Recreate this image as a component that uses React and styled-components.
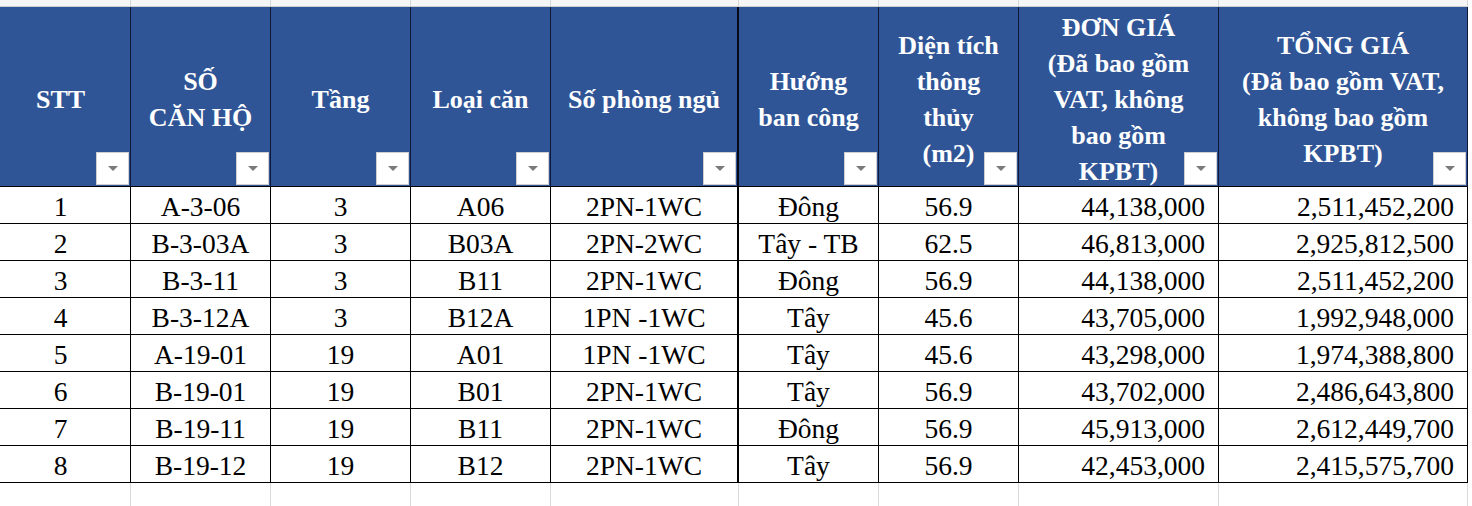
import React from 'react';
import styled, { createGlobalStyle } from 'styled-components';

const SERIF = '"Liberation Serif", "Times New Roman", serif';

const GlobalStyle = createGlobalStyle`
  body {
    margin: 0;
    font-family: "Liberation Serif", serif;
  }
`;

const COLUMNS = '140px 140px 140px 140px 188px 140px 140px 200px 249px';

const Page = styled.div`
  width: 1472px;
  height: 506px;
  overflow: hidden;
  background: #ffffff;
`;

// the whole sheet is one grid, first column starts a little off screen
const Table = styled.div`
  display: grid;
  grid-template-columns: ${COLUMNS};
  margin-left: -9px;
`;

const TopCell = styled.div`
  box-sizing: border-box;
  height: 7px;
  background: #f6f6f6;
  border-right: 1px solid #d6d6d6;
  border-bottom: 1px solid #cfcfcf;
`;

const HeadCell = styled.div`
  box-sizing: border-box;
  position: relative;
  height: 180px;
  background: #2f5597;
  border-right: ${p => (p.$thick ? '2px solid #050a1c' : '1px solid #0d1838')};
  border-bottom: 1px solid #000000;
  display: flex;
  align-items: center;
  justify-content: center;
  padding-top: 6px;
  text-align: center;
  white-space: nowrap;
`;

const HeadText = styled.div.attrs({ style: { fontFamily: SERIF } })`
  color: #ffffff;
  font-family: "Liberation Serif", serif;
  font-weight: bold;
  font-size: 26px;
  line-height: 36px;
`;

const FilterButton = styled.div`
  box-sizing: border-box;
  position: absolute;
  right: 1px;
  bottom: 1px;
  width: 33px;
  height: 33px;
  background: #ffffff;
  border: 1px solid #cfcfcf;
  display: flex;
  align-items: center;
  justify-content: center;

  &::after {
    content: '';
    border-left: 5px solid transparent;
    border-right: 5px solid transparent;
    border-top: 5px solid #7a7a7a;
  }
`;

const Cell = styled.div.attrs({ style: { fontFamily: SERIF } })`
  box-sizing: border-box;
  height: 37px;
  border-right: ${p => (p.$thick ? '2px solid #000000' : '1px solid #000000')};
  border-bottom: 1px solid #000000;
  padding: 2px 13px 0 13px;
  color: #000000;
  font-family: "Liberation Serif", serif;
  font-size: 27.5px;
  line-height: 35px;
  text-align: ${p => (p.$right ? 'right' : 'center')};
  white-space: nowrap;
`;

const EmptyCell = styled.div`
  height: 30px;
  border-right: 1px solid #dadada;
`;

const headers = [
  ['STT'],
  ['SỐ', 'CĂN HỘ'],
  ['Tầng'],
  ['Loại căn'],
  ['Số phòng ngủ'],
  ['Hướng', 'ban công'],
  ['Diện tích', 'thông', 'thủy', '(m2)'],
  ['ĐƠN GIÁ', '(Đã bao gồm', 'VAT, không', 'bao gồm', 'KPBT)'],
  ['TỔNG GIÁ', '(Đã bao gồm VAT,', 'không bao gồm', 'KPBT)'],
];

const rows = [
  ['1', 'A-3-06', '3', 'A06', '2PN-1WC', 'Đông', '56.9', '44,138,000', '2,511,452,200'],
  ['2', 'B-3-03A', '3', 'B03A', '2PN-2WC', 'Tây - TB', '62.5', '46,813,000', '2,925,812,500'],
  ['3', 'B-3-11', '3', 'B11', '2PN-1WC', 'Đông', '56.9', '44,138,000', '2,511,452,200'],
  ['4', 'B-3-12A', '3', 'B12A', '1PN -1WC', 'Tây', '45.6', '43,705,000', '1,992,948,000'],
  ['5', 'A-19-01', '19', 'A01', '1PN -1WC', 'Tây', '45.6', '43,298,000', '1,974,388,800'],
  ['6', 'B-19-01', '19', 'B01', '2PN-1WC', 'Tây', '56.9', '43,702,000', '2,486,643,800'],
  ['7', 'B-19-11', '19', 'B11', '2PN-1WC', 'Đông', '56.9', '45,913,000', '2,612,449,700'],
  ['8', 'B-19-12', '19', 'B12', '2PN-1WC', 'Tây', '56.9', '42,453,000', '2,415,575,700'],
];

// price columns are right aligned, column 5 has the heavier border
const isRight = i => i >= 7;
const isThick = i => i === 4;

export default function App() {
  return (
    <Page>
      <GlobalStyle />
      <Table>
        {headers.map((_, i) => (
          <TopCell key={'t' + i} />
        ))}
        {headers.map((lines, i) => (
          <HeadCell key={'h' + i} $thick={isThick(i)}>
            <HeadText>
              {lines.map((line, j) => (
                <div key={j}>{line}</div>
              ))}
            </HeadText>
            <FilterButton />
          </HeadCell>
        ))}
        {rows.map((row, r) =>
          row.map((value, i) => (
            <Cell key={r + '-' + i} $right={isRight(i)} $thick={isThick(i)}>
              {value}
            </Cell>
          ))
        )}
        {headers.map((_, i) => (
          <EmptyCell key={'e' + i} />
        ))}
      </Table>
    </Page>
  );
}
